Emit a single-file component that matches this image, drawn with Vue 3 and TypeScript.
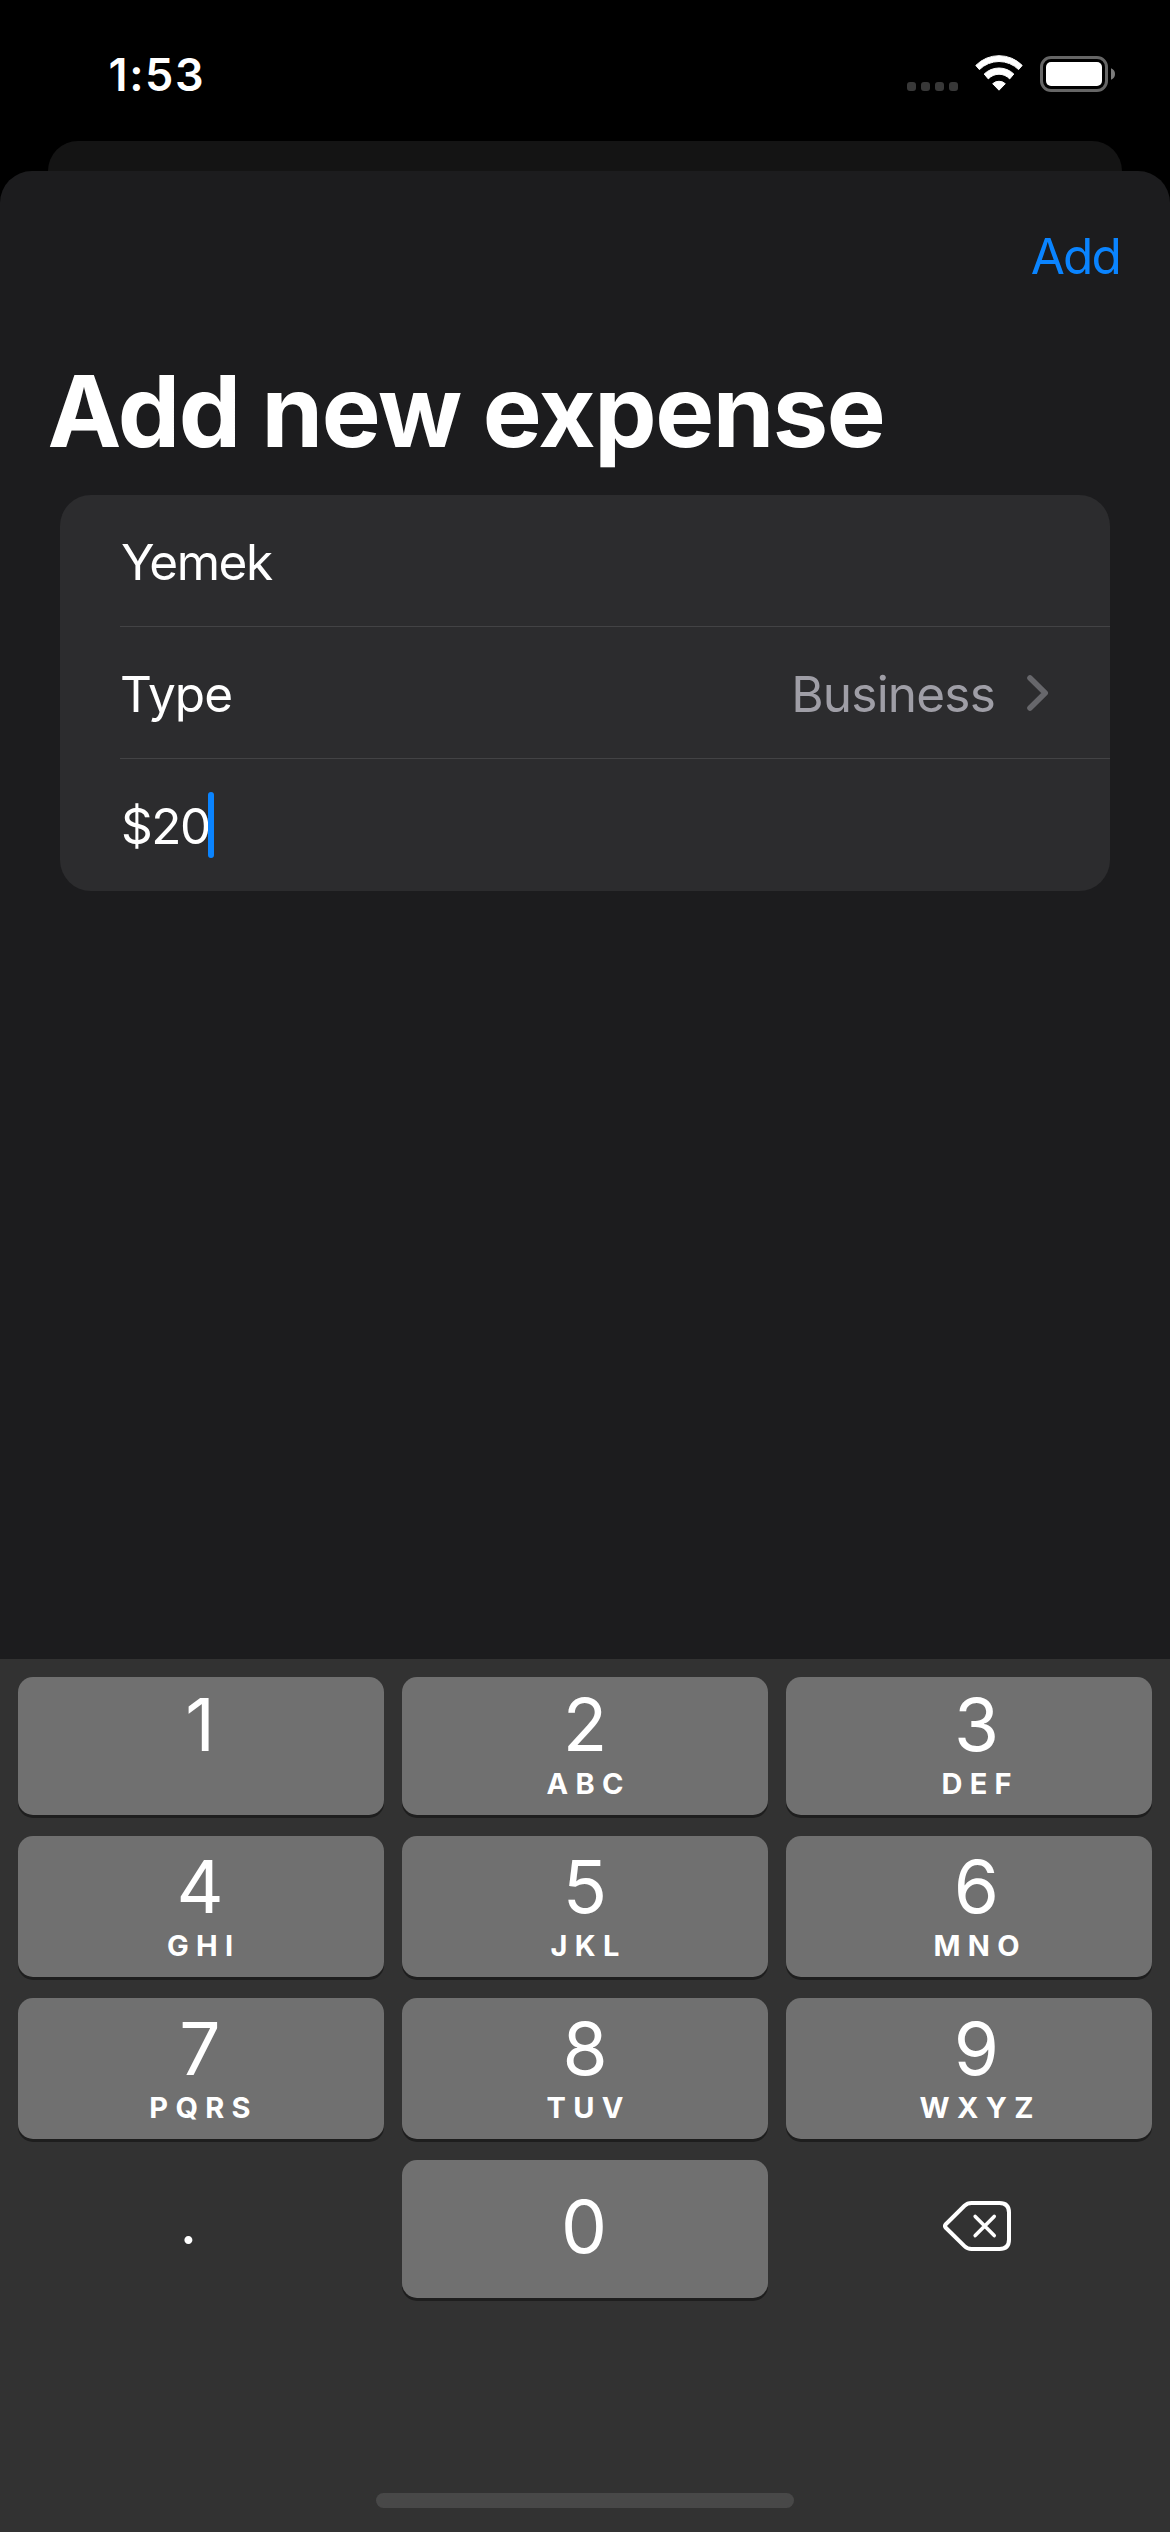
<script setup lang="ts">
import { ref } from 'vue'

interface Key {
  digit: string
  letters: string
}

const time = ref('1:53')
const name = ref('Yemek')
const type = ref('Business')
const amount = ref('$20')

const keys: Key[] = [
  { digit: '1', letters: '' },
  { digit: '2', letters: 'ABC' },
  { digit: '3', letters: 'DEF' },
  { digit: '4', letters: 'GHI' },
  { digit: '5', letters: 'JKL' },
  { digit: '6', letters: 'MNO' },
  { digit: '7', letters: 'PQRS' },
  { digit: '8', letters: 'TUV' },
  { digit: '9', letters: 'WXYZ' },
]
</script>

<template>
  <div class="screen">
    <header class="status">
      <span class="time">{{ time }}</span>
      <div class="indicators">
        <div class="signal"><i v-for="n in 4" :key="n" /></div>
        <svg class="wifi" width="48" height="36" viewBox="0 0 48 36">
          <g fill="#fff" stroke="#fff" stroke-width="1" stroke-linejoin="round">
            <path d="M.8 10.4A32.6 32.6 0 0 1 47.2 10.4L43.6 14.6A27.8 27.8 0 0 0 4.4 14.6Z" />
            <path d="M9.2 19A21.3 21.3 0 0 1 38.8 19L34.7 23.9A14.6 14.6 0 0 0 13.3 23.9Z" />
            <path d="M17.7 28.7A9.4 9.4 0 0 1 30.3 28.7L24 35.2Z" />
          </g>
        </svg>
        <svg class="battery" width="75" height="36" viewBox="0 0 75 36">
          <rect x="1.5" y="1.5" width="65" height="33" rx="9.5" fill="none" stroke="#666" stroke-width="3" />
          <rect x="6" y="6" width="56" height="24" rx="5" fill="#fff" />
          <path d="M71 12.2Q75 13.8 75 18Q75 22.2 71 23.8Z" fill="#7c7c7c" />
        </svg>
      </div>
    </header>

    <div class="backdrop" />

    <main class="sheet">
      <nav class="nav"><button class="add">Add</button></nav>
      <h1 class="title">Add new expense</h1>
      <section class="form">
        <div class="row">
          <span class="text name">{{ name }}</span>
        </div>
        <div class="row">
          <span class="text label">Type</span>
          <span class="text value">{{ type }}</span>
          <svg class="chevron" width="22" height="36" viewBox="0 0 22 36">
            <polyline points="3,3 18.2,18 3,33" fill="none" stroke="#67676b" stroke-width="5.6" stroke-linecap="round" stroke-linejoin="round" />
          </svg>
        </div>
        <div class="row">
          <span class="text amount">{{ amount }}</span>
          <span class="caret" />
        </div>
      </section>
    </main>

    <footer class="keyboard">
      <div class="pad">
        <div v-for="key in keys" :key="key.digit" class="key">
          <span class="digit">{{ key.digit }}</span>
          <span class="letters">{{ key.letters }}</span>
        </div>
        <div class="plain dot">.</div>
        <div class="key zero"><span class="digit">0</span></div>
        <div class="plain delete">
          <svg width="68" height="50" viewBox="0 0 68 50" fill="none" stroke="#fff" stroke-linecap="round" stroke-linejoin="round">
            <path stroke-width="4" d="M2.8 23.2L21.5 4.8Q24.3 2 28.5 2H56.5Q66 2 66 11.5V38.5Q66 48 56.5 48H28.5Q24.3 48 21.5 45.2L2.8 26.8Q1.2 25 2.8 23.2Z" />
            <path stroke-width="3.6" d="M32.2 15.4L51.2 34.6M51.2 15.4L32.2 34.6" />
          </svg>
        </div>
      </div>
      <div class="home" />
    </footer>
  </div>
</template>

<style>
body {
  background: #000;
}
</style>

<style scoped>
.screen {
  display: flex;
  flex-direction: column;
  width: 1170px;
  height: 2532px;
  overflow: hidden;
  background: #000;
  color: #fff;
  font-family: Inter, 'Liberation Sans', sans-serif;
}

.status {
  display: flex;
  justify-content: space-between;
  align-items: flex-start;
  box-sizing: border-box;
  height: 141px;
  padding: 47px 55px 0 108.5px;
}

.time {
  font-size: 45px;
  font-weight: 600;
  line-height: 55px;
  letter-spacing: 1.6px;
}

.indicators {
  display: flex;
  align-items: flex-start;
  padding-top: 8px;
}

.signal {
  display: flex;
  gap: 5px;
  padding-top: 27px;
}

.signal i {
  width: 9px;
  height: 9px;
  border-radius: 3px;
  background: #383838;
}

.wifi {
  margin-left: 17px;
}

.battery {
  margin: 1px 0 0 17px;
}

.backdrop {
  height: 30px;
  margin: 0 48px;
  border-radius: 30px 30px 0 0;
  background: #141414;
}

.sheet {
  flex: 1;
  border-radius: 32px 32px 0 0;
  background: #1c1c1e;
}

.nav {
  display: flex;
  justify-content: flex-end;
  padding: 55px 50px 0 0;
}

.add {
  padding: 0;
  border: 0;
  background: none;
  color: #0a84ff;
  font: 400 49.5px/60px Inter, 'Liberation Sans', sans-serif;
  letter-spacing: -1.85px;
}

.title {
  margin: 65px 0 24px 47.5px;
  font-size: 99px;
  font-weight: 700;
  line-height: 120px;
  letter-spacing: -1.45px;
}

.form {
  margin: 0 60px;
  padding-left: 60px;
  border-radius: 31px;
  background: #2c2c2e;
}

.row {
  display: flex;
  align-items: center;
  height: 132px;
  padding-right: 61px;
  box-shadow: inset 0 -1px #434345;
}

.row:last-child {
  box-shadow: none;
}

.text {
  padding-top: 2px;
  font-size: 49.5px;
  line-height: 60px;
}

.name {
  margin-left: 1px;
  letter-spacing: -1.5px;
}

.label {
  letter-spacing: -0.95px;
}

.value {
  margin-left: auto;
  color: #9f9ea6;
  letter-spacing: -0.8px;
}

.chevron {
  margin-left: 32px;
}

.amount {
  margin-left: 1px;
  letter-spacing: -1.5px;
}

.caret {
  width: 6px;
  height: 66px;
  margin-left: -1.7px;
  border-radius: 3px;
  background: #0a84ff;
}

.keyboard {
  display: flex;
  flex-direction: column;
  box-sizing: border-box;
  height: 873px;
  padding: 18px 18px 24px;
  background: #323232;
}

.pad {
  display: grid;
  grid-template-columns: repeat(3, 1fr);
  grid-template-rows: 138px 141px 141px 138px;
  gap: 21px 18px;
}

.key {
  display: flex;
  flex-direction: column;
  align-items: center;
  justify-content: flex-end;
  padding-bottom: 14px;
  border-radius: 15px;
  background: #707070;
  box-shadow: 0 3px #1e1e1e;
}

.key:nth-child(3n + 1) {
  padding-right: 2px;
}

.key:nth-child(3n) {
  padding-left: 15px;
}

.digit {
  margin-bottom: 12px;
  font-size: 73px;
  line-height: 59px;
}

.letters {
  height: 35px;
  margin-right: -7.3px;
  font-size: 29px;
  font-weight: 700;
  line-height: 35px;
  letter-spacing: 7.3px;
}

.zero {
  padding-right: 2px;
  padding-bottom: 42px;
}

.zero .digit {
  margin: 0;
}

.plain {
  display: flex;
  justify-content: center;
  align-items: flex-start;
}

.dot {
  padding: 25px 25px 0 0;
  font-size: 60px;
  line-height: 75px;
}

.delete {
  padding: 41px 0 0 16px;
}

.home {
  width: 418px;
  height: 15px;
  margin: auto auto 0;
  border-radius: 8px;
  background: #484848;
}
</style>
